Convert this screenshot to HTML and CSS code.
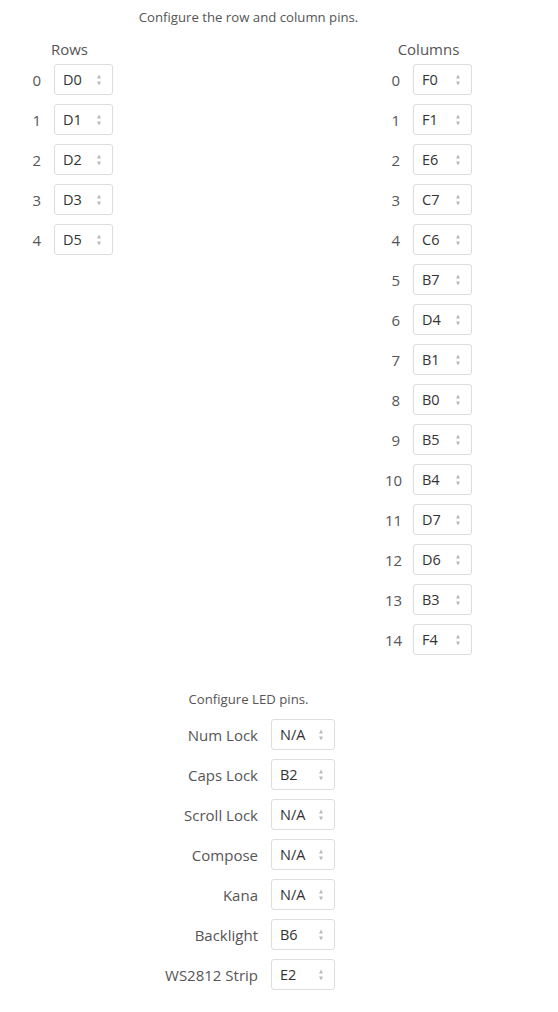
FILE: index.html
```html
<!DOCTYPE html>
<html>
<head>
<meta charset="utf-8">
<link rel="stylesheet" href="styles.css">
</head>
<body>
<div class="page">
  <p class="intro">Configure the row and column pins.</p>
  <div class="matrix">
    <div class="pin-group">
      <div class="group-title">Rows</div>
      <div class="pin-row"><span class="num">0</span><div class="sel"><span>D0</span><svg class="arr" width="4" height="12" viewBox="0 0 4 12"><path d="M2 0.5L4 4.5H0Z M2 11.5L4 7.5H0Z"/></svg></div></div>
      <div class="pin-row"><span class="num">1</span><div class="sel"><span>D1</span><svg class="arr" width="4" height="12" viewBox="0 0 4 12"><path d="M2 0.5L4 4.5H0Z M2 11.5L4 7.5H0Z"/></svg></div></div>
      <div class="pin-row"><span class="num">2</span><div class="sel"><span>D2</span><svg class="arr" width="4" height="12" viewBox="0 0 4 12"><path d="M2 0.5L4 4.5H0Z M2 11.5L4 7.5H0Z"/></svg></div></div>
      <div class="pin-row"><span class="num">3</span><div class="sel"><span>D3</span><svg class="arr" width="4" height="12" viewBox="0 0 4 12"><path d="M2 0.5L4 4.5H0Z M2 11.5L4 7.5H0Z"/></svg></div></div>
      <div class="pin-row"><span class="num">4</span><div class="sel"><span>D5</span><svg class="arr" width="4" height="12" viewBox="0 0 4 12"><path d="M2 0.5L4 4.5H0Z M2 11.5L4 7.5H0Z"/></svg></div></div>
    </div>
    <div class="pin-group">
      <div class="group-title">Columns</div>
      <div class="pin-row"><span class="num">0</span><div class="sel"><span>F0</span><svg class="arr" width="4" height="12" viewBox="0 0 4 12"><path d="M2 0.5L4 4.5H0Z M2 11.5L4 7.5H0Z"/></svg></div></div>
      <div class="pin-row"><span class="num">1</span><div class="sel"><span>F1</span><svg class="arr" width="4" height="12" viewBox="0 0 4 12"><path d="M2 0.5L4 4.5H0Z M2 11.5L4 7.5H0Z"/></svg></div></div>
      <div class="pin-row"><span class="num">2</span><div class="sel"><span>E6</span><svg class="arr" width="4" height="12" viewBox="0 0 4 12"><path d="M2 0.5L4 4.5H0Z M2 11.5L4 7.5H0Z"/></svg></div></div>
      <div class="pin-row"><span class="num">3</span><div class="sel"><span>C7</span><svg class="arr" width="4" height="12" viewBox="0 0 4 12"><path d="M2 0.5L4 4.5H0Z M2 11.5L4 7.5H0Z"/></svg></div></div>
      <div class="pin-row"><span class="num">4</span><div class="sel"><span>C6</span><svg class="arr" width="4" height="12" viewBox="0 0 4 12"><path d="M2 0.5L4 4.5H0Z M2 11.5L4 7.5H0Z"/></svg></div></div>
      <div class="pin-row"><span class="num">5</span><div class="sel"><span>B7</span><svg class="arr" width="4" height="12" viewBox="0 0 4 12"><path d="M2 0.5L4 4.5H0Z M2 11.5L4 7.5H0Z"/></svg></div></div>
      <div class="pin-row"><span class="num">6</span><div class="sel"><span>D4</span><svg class="arr" width="4" height="12" viewBox="0 0 4 12"><path d="M2 0.5L4 4.5H0Z M2 11.5L4 7.5H0Z"/></svg></div></div>
      <div class="pin-row"><span class="num">7</span><div class="sel"><span>B1</span><svg class="arr" width="4" height="12" viewBox="0 0 4 12"><path d="M2 0.5L4 4.5H0Z M2 11.5L4 7.5H0Z"/></svg></div></div>
      <div class="pin-row"><span class="num">8</span><div class="sel"><span>B0</span><svg class="arr" width="4" height="12" viewBox="0 0 4 12"><path d="M2 0.5L4 4.5H0Z M2 11.5L4 7.5H0Z"/></svg></div></div>
      <div class="pin-row"><span class="num">9</span><div class="sel"><span>B5</span><svg class="arr" width="4" height="12" viewBox="0 0 4 12"><path d="M2 0.5L4 4.5H0Z M2 11.5L4 7.5H0Z"/></svg></div></div>
      <div class="pin-row"><span class="num">10</span><div class="sel"><span>B4</span><svg class="arr" width="4" height="12" viewBox="0 0 4 12"><path d="M2 0.5L4 4.5H0Z M2 11.5L4 7.5H0Z"/></svg></div></div>
      <div class="pin-row"><span class="num">11</span><div class="sel"><span>D7</span><svg class="arr" width="4" height="12" viewBox="0 0 4 12"><path d="M2 0.5L4 4.5H0Z M2 11.5L4 7.5H0Z"/></svg></div></div>
      <div class="pin-row"><span class="num">12</span><div class="sel"><span>D6</span><svg class="arr" width="4" height="12" viewBox="0 0 4 12"><path d="M2 0.5L4 4.5H0Z M2 11.5L4 7.5H0Z"/></svg></div></div>
      <div class="pin-row"><span class="num">13</span><div class="sel"><span>B3</span><svg class="arr" width="4" height="12" viewBox="0 0 4 12"><path d="M2 0.5L4 4.5H0Z M2 11.5L4 7.5H0Z"/></svg></div></div>
      <div class="pin-row"><span class="num">14</span><div class="sel"><span>F4</span><svg class="arr" width="4" height="12" viewBox="0 0 4 12"><path d="M2 0.5L4 4.5H0Z M2 11.5L4 7.5H0Z"/></svg></div></div>
    </div>
  </div>
  <p class="intro led-intro">Configure LED pins.</p>
  <div class="led-group">
    <div class="pin-row led-row"><span class="name">Num Lock</span><div class="sel wide"><span>N/A</span><svg class="arr" width="4" height="12" viewBox="0 0 4 12"><path d="M2 0.5L4 4.5H0Z M2 11.5L4 7.5H0Z"/></svg></div></div>
    <div class="pin-row led-row"><span class="name">Caps Lock</span><div class="sel wide"><span>B2</span><svg class="arr" width="4" height="12" viewBox="0 0 4 12"><path d="M2 0.5L4 4.5H0Z M2 11.5L4 7.5H0Z"/></svg></div></div>
    <div class="pin-row led-row"><span class="name">Scroll Lock</span><div class="sel wide"><span>N/A</span><svg class="arr" width="4" height="12" viewBox="0 0 4 12"><path d="M2 0.5L4 4.5H0Z M2 11.5L4 7.5H0Z"/></svg></div></div>
    <div class="pin-row led-row"><span class="name">Compose</span><div class="sel wide"><span>N/A</span><svg class="arr" width="4" height="12" viewBox="0 0 4 12"><path d="M2 0.5L4 4.5H0Z M2 11.5L4 7.5H0Z"/></svg></div></div>
    <div class="pin-row led-row"><span class="name">Kana</span><div class="sel wide"><span>N/A</span><svg class="arr" width="4" height="12" viewBox="0 0 4 12"><path d="M2 0.5L4 4.5H0Z M2 11.5L4 7.5H0Z"/></svg></div></div>
    <div class="pin-row led-row"><span class="name">Backlight</span><div class="sel wide"><span>B6</span><svg class="arr" width="4" height="12" viewBox="0 0 4 12"><path d="M2 0.5L4 4.5H0Z M2 11.5L4 7.5H0Z"/></svg></div></div>
    <div class="pin-row led-row"><span class="name">WS2812 Strip</span><div class="sel wide"><span>E2</span><svg class="arr" width="4" height="12" viewBox="0 0 4 12"><path d="M2 0.5L4 4.5H0Z M2 11.5L4 7.5H0Z"/></svg></div></div>
  </div>
</div>
</body>
</html>
```

FILE: styles.css
```css
html, body {
  margin: 0;
  padding: 0;
  background: #fff;
}
body {
  font-family: "Open Sans", "DejaVu Sans", sans-serif;
  color: #555;
}
.page {
  width: 497px;
  display: flex;
  flex-direction: column;
  align-items: stretch;
}
.intro {
  margin: 8px 0 0;
  font-size: 13.2px;
  line-height: 18px;
  text-align: center;
  color: #555;
}
.matrix {
  display: flex;
  justify-content: space-between;
  align-items: flex-start;
  padding: 0 25px 0 26px;
  margin-top: 13px;
}
.pin-group {
  display: flex;
  flex-direction: column;
  gap: 9px;
}
.group-title {
  font-size: 15px;
  line-height: 20px;
  text-align: center;
  margin-bottom: -4px;
}
.pin-row {
  display: flex;
  align-items: center;
  gap: 13px;
  height: 31px;
}
.num {
  width: 15px;
  text-align: right;
  font-size: 15px;
}
.sel {
  box-sizing: border-box;
  width: 59px;
  height: 31px;
  border: 1px solid #ddd;
  border-radius: 3px;
  display: flex;
  align-items: center;
  justify-content: space-between;
  padding: 0 11px 0 8px;
  font-size: 14.5px;
  color: #333;
  background: #fff;
  flex: none;
}
.sel.wide {
  width: 64px;
}
.arr {
  fill: #bbb;
  display: block;
}
.led-intro {
  margin-top: 35px;
}
.led-group {
  width: 165px;
  display: flex;
  flex-direction: column;
  gap: 9px;
  align-self: center;
  margin-top: 11px;
  margin-left: 8px;
}
.led-row {
  justify-content: flex-end;
}
.name {
  white-space: nowrap;
  font-size: 15px;
}
```
